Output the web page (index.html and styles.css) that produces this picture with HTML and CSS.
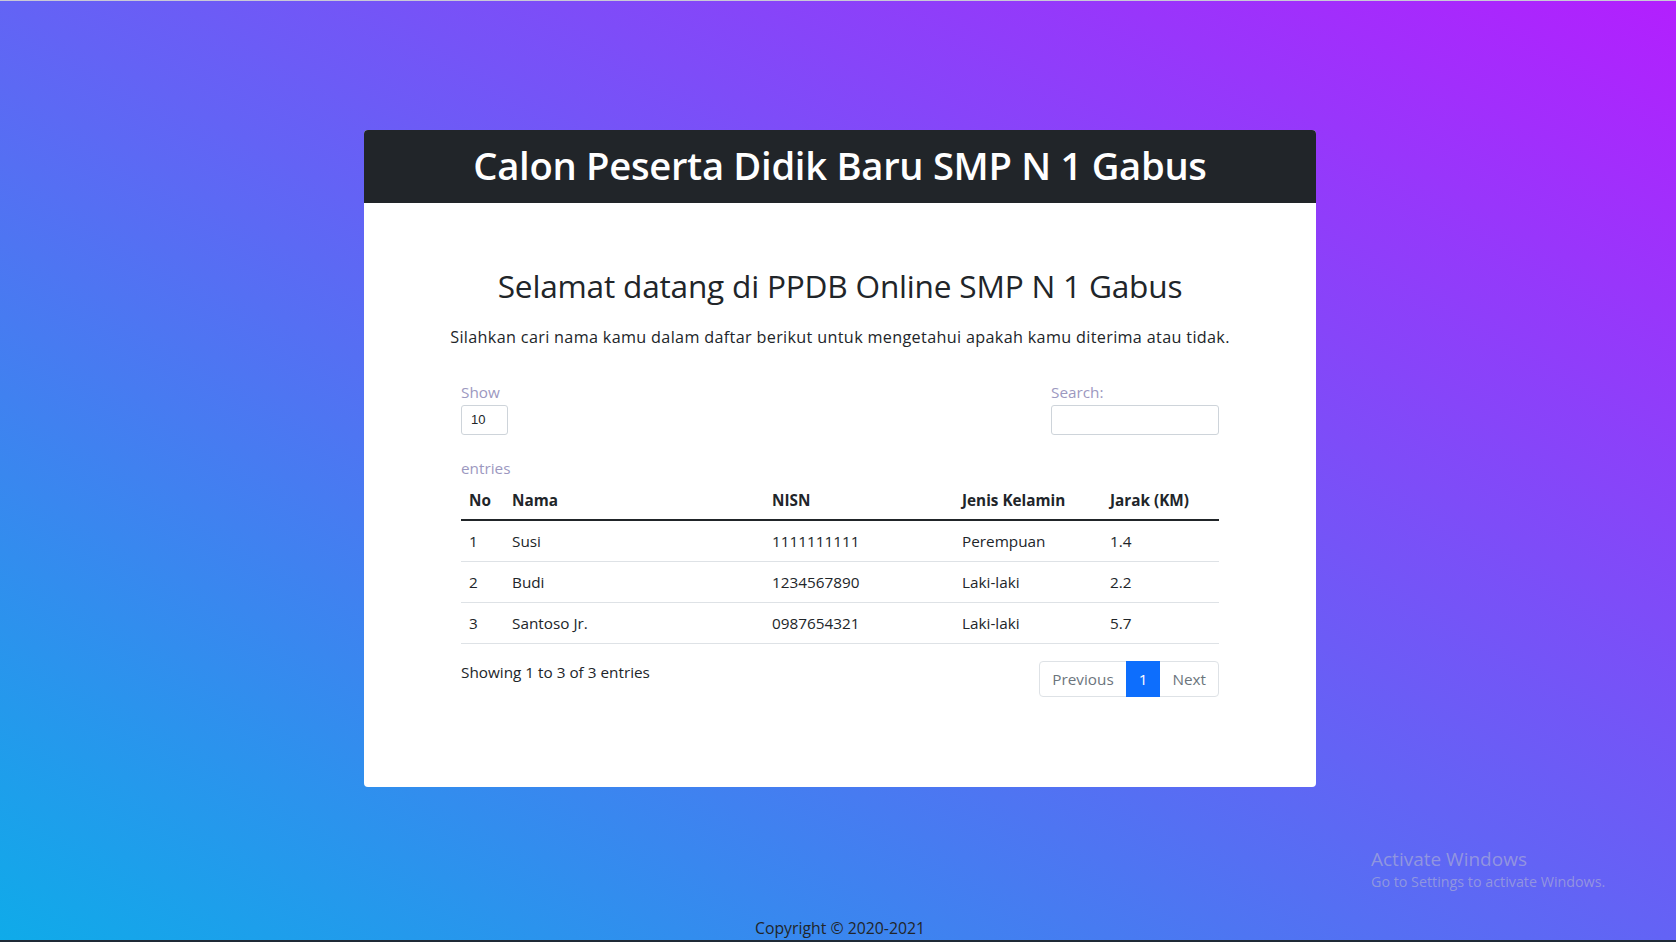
FILE: index.html
```html
<!DOCTYPE html>
<html lang="id">
<head>
<meta charset="utf-8">
<title>PPDB Online SMP N 1 Gabus</title>
<link rel="stylesheet" href="styles.css">
</head>
<body>
<div class="page">
  <main class="main">
    <section class="card">
      <header class="card-header">
        <h1 class="title">Calon Peserta Didik Baru SMP N 1 Gabus</h1>
      </header>
      <div class="card-body">
        <h2 class="welcome">Selamat datang di PPDB Online SMP N 1 Gabus</h2>
        <p class="lead">Silahkan cari nama kamu dalam daftar berikut untuk mengetahui apakah kamu diterima atau tidak.</p>
        <div class="dt">
          <div class="dt-top">
            <div class="dt-length">
              <span class="dt-label">Show</span>
              <div class="select-box">10</div>
              <span class="dt-label entries">entries</span>
            </div>
            <div class="dt-search">
              <span class="dt-label">Search:</span>
              <div class="search-box"></div>
            </div>
          </div>
          <table class="table">
            <colgroup>
              <col class="c-no"><col class="c-nama"><col class="c-nisn"><col class="c-jk"><col class="c-jarak">
            </colgroup>
            <thead>
              <tr><th>No</th><th>Nama</th><th>NISN</th><th>Jenis Kelamin</th><th>Jarak (KM)</th></tr>
            </thead>
            <tbody>
              <tr><td>1</td><td>Susi</td><td>1111111111</td><td>Perempuan</td><td>1.4</td></tr>
              <tr><td>2</td><td>Budi</td><td>1234567890</td><td>Laki-laki</td><td>2.2</td></tr>
              <tr><td>3</td><td>Santoso Jr.</td><td>0987654321</td><td>Laki-laki</td><td>5.7</td></tr>
            </tbody>
          </table>
          <div class="dt-bottom">
            <div class="dt-info">Showing 1 to 3 of 3 entries</div>
            <nav class="pagination">
              <span class="page-link">Previous</span>
              <span class="page-link active">1</span>
              <span class="page-link">Next</span>
            </nav>
          </div>
        </div>
      </div>
    </section>
  </main>
  <footer class="footer">Copyright © 2020-2021</footer>
  <div class="taskbar"></div>
  <div class="activate">
    <div class="activate-title">Activate Windows</div>
    <div class="activate-sub">Go to Settings to activate Windows.</div>
  </div>
</div>
</body>
</html>
```

FILE: styles.css
```css
* { box-sizing: border-box; }
html, body { margin: 0; padding: 0; }
body {
  font-family: "Open Sans", "Noto Sans", "Liberation Sans", sans-serif;
  font-size: 15.3px;
  line-height: 24px;
  color: #212529;
  background: linear-gradient(to top right, #0fabe9 0%, #6363f5 50%, #b31ffe 100%);
  min-height: 100vh;
  overflow: hidden;
}
.page {
  position: relative;
  min-height: 100vh;
  display: flex;
  flex-direction: column;
  border-top: 1px solid #c9c9d6;
}
.main {
  flex: 1;
  padding-top: 129px;
  padding-left: 4px;
  display: flex;
  justify-content: center;
  align-items: flex-start;
}
.card {
  width: 952px;
  background: #fff;
  border-radius: 4px;
  overflow: hidden;
}
.card-header {
  background: #212529;
  height: 73px;
  padding-bottom: 4px;
  display: flex;
  align-items: center;
  justify-content: center;
}
.title {
  margin: 0;
  color: #fff;
  font-size: 38.2px;
  font-weight: 600;
  line-height: 46px;
  letter-spacing: -0.3px;
}
.card-body {
  padding: 64px 40px 90px;
  text-align: center;
}
.welcome {
  margin: 0;
  font-size: 31.6px;
  font-weight: 500;
  line-height: 38px;
  letter-spacing: -0.2px;
}
.lead {
  margin: 20px 0 0;
  font-size: 16.2px;
  line-height: 24px;
  letter-spacing: 0.33px;
  white-space: nowrap;
}
.dt {
  width: 758px;
  margin: 31px auto 0;
  text-align: left;
}
.dt-top {
  display: flex;
  justify-content: space-between;
  align-items: flex-start;
}
.dt-length, .dt-search {
  display: flex;
  flex-direction: column;
  align-items: flex-start;
}
.dt-label {
  color: #9c98bf;
  font-size: 15.3px;
  line-height: 24px;
}
.entries { margin-top: 21px; }
.select-box {
  width: 47px;
  height: 30px;
  margin-top: 1px;
  border: 1px solid #ced4da;
  border-radius: 3px;
  font-family: "Liberation Sans", Arial, sans-serif;
  font-size: 13px;
  line-height: 28px;
  padding-left: 9px;
  color: #212529;
}
.search-box {
  width: 168px;
  height: 30px;
  margin-top: 1px;
  border: 1px solid #ced4da;
  border-radius: 3px;
}
.table {
  width: 758px;
  border-collapse: collapse;
  margin-top: 0;
}
.c-no { width: 43px; }
.c-nama { width: 260px; }
.c-nisn { width: 190px; }
.c-jk { width: 148px; }
.c-jarak { width: 117px; }
.table th {
  text-align: left;
  font-weight: 700;
  font-size: 15.3px;
  padding: 8px 8px 7px;
  border-bottom: 2px solid #212529;
}
.table td {
  font-size: 15.3px;
  padding: 8px;
  border-bottom: 1px solid #dee2e6;
}
.dt-bottom {
  display: flex;
  justify-content: space-between;
  align-items: flex-start;
  margin-top: 16px;
}
.dt-info {
  font-size: 15.3px;
  line-height: 24px;
}
.pagination {
  display: flex;
  margin-top: 1px;
}
.page-link {
  display: block;
  height: 36px;
  padding: 0 12px;
  line-height: 34px;
  border: 1px solid #dee2e6;
  color: #6c757d;
  font-size: 15.3px;
  background: #fff;
}
.page-link + .page-link { margin-left: -1px; }
.page-link:first-child { border-radius: 4px 0 0 4px; }
.page-link:last-child { border-radius: 0 4px 4px 0; }
.page-link.active {
  background: #0d6efd;
  border-color: #0d6efd;
  color: #fff;
  position: relative;
}
.footer {
  text-align: center;
  font-size: 15.8px;
  line-height: 24px;
  color: #212529;
  padding-left: 4px;
}
.taskbar {
  height: 2px;
  background: #1f2a36;
}
.activate {
  position: absolute;
  left: 1371px;
  top: 845px;
  color: rgba(190, 190, 205, 0.55);
  font-family: "Open Sans", "Noto Sans", sans-serif;
}
.activate-title {
  font-size: 19px;
  line-height: 26px;
}
.activate-sub {
  font-size: 14.3px;
  line-height: 20px;
}
```
